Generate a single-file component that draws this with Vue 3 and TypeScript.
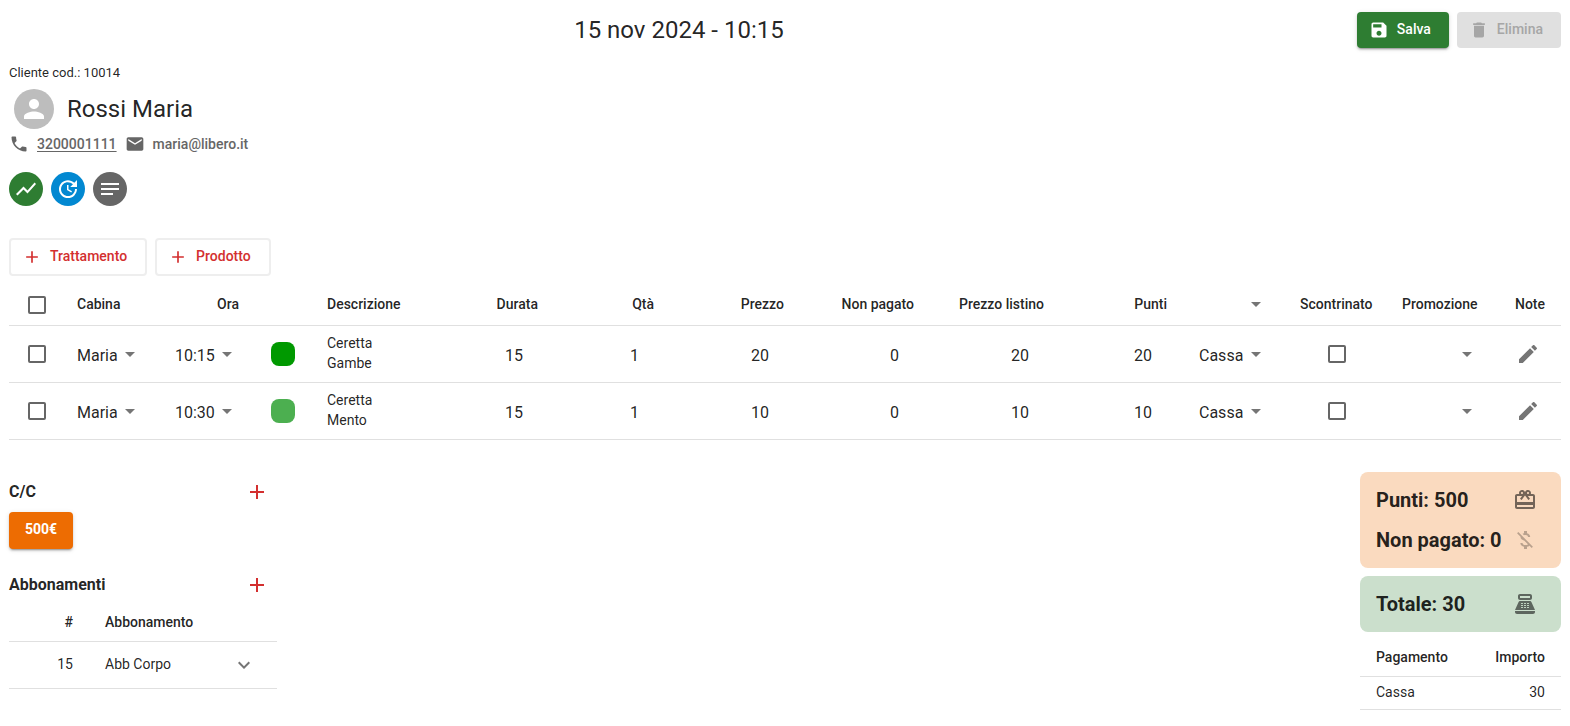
<script setup lang="ts">
import { ref } from 'vue'

interface Row {
  id: number
  selected: boolean
  cabina: string
  ora: string
  shade: string
  descrizione: string
  durata: number
  qta: number
  prezzo: number
  nonPagato: number
  listino: number
  punti: number
  cassa: string
  scontrinato: boolean
  promozione: string
}

type NumericKey = 'durata' | 'qta' | 'prezzo' | 'nonPagato' | 'listino' | 'punti'

const numericColumns: { key: NumericKey; label: string; cls: string }[] = [
  { key: 'durata', label: 'Durata', cls: 'c-durata' },
  { key: 'qta', label: 'Qtà', cls: 'c-qta' },
  { key: 'prezzo', label: 'Prezzo', cls: 'c-price' },
  { key: 'nonPagato', label: 'Non pagato', cls: 'c-price' },
  { key: 'listino', label: 'Prezzo listino', cls: 'c-price' },
  { key: 'punti', label: 'Punti', cls: 'c-punti' },
]

const allSelected = ref(false)
const allCassa = ref('')

const rows = ref<Row[]>([
  {
    id: 1, selected: false, cabina: 'Maria', ora: '10:15', shade: 'dark', descrizione: 'Ceretta Gambe',
    durata: 15, qta: 1, prezzo: 20, nonPagato: 0, listino: 20, punti: 20,
    cassa: 'Cassa', scontrinato: false, promozione: '',
  },
  {
    id: 2, selected: false, cabina: 'Maria', ora: '10:30', shade: 'light', descrizione: 'Ceretta Mento',
    durata: 15, qta: 1, prezzo: 10, nonPagato: 0, listino: 10, punti: 10,
    cassa: 'Cassa', scontrinato: false, promozione: '',
  },
])

function toggleAll() {
  rows.value.forEach((r) => { r.selected = allSelected.value })
}

const addPath = 'M19 13h-6v6h-2v-6H5v-2h6V5h2v6h6v2z'
const arrowPath = 'M7 10l5 5 5-5z'
</script>

<template>
  <main class="page">
    <header class="top">
      <h1 class="title">15 nov 2024 - 10:15</h1>
      <button type="button" class="btn btn-save">
        <svg class="ico-s" viewBox="0 0 24 24" aria-hidden="true"><path d="M17 3H5c-1.11 0-2 .9-2 2v14c0 1.1.89 2 2 2h14c1.1 0 2-.9 2-2V7l-4-4zm-5 16c-1.66 0-3-1.34-3-3s1.34-3 3-3 3 1.34 3 3-1.34 3-3 3zm3-10H5V5h10v4z" /></svg>
        <span>Salva</span>
      </button>
      <button type="button" class="btn btn-off" disabled>
        <svg class="ico-s" viewBox="0 0 24 24" aria-hidden="true"><path d="M6 19c0 1.1.9 2 2 2h8c1.1 0 2-.9 2-2V7H6v12zM19 4h-3.5l-1-1h-5l-1 1H5v2h14V4z" /></svg>
        <span>Elimina</span>
      </button>
    </header>

    <section class="client">
      <p class="code">Cliente cod.: 10014</p>
      <div class="who">
        <span class="avatar">
          <svg viewBox="0 0 24 24" aria-hidden="true"><path d="M12 12c2.21 0 4-1.79 4-4s-1.79-4-4-4-4 1.79-4 4 1.79 4 4 4zm0 2c-2.67 0-8 1.34-8 4v2h16v-2c0-2.66-5.33-4-8-4z" /></svg>
        </span>
        <h2 class="name">Rossi Maria</h2>
      </div>
      <div class="contacts">
        <svg class="ico-s" viewBox="0 0 24 24" aria-hidden="true"><path d="M6.620 10.790c1.440 2.830 3.760 5.140 6.590 6.590l2.200-2.200c.270-.270.670-.360 1.020-.240 1.120.370 2.330.570 3.570.570.550 0 1 .450 1 1V20c0 .550-.450 1-1 1-9.390 0-17-7.610-17-17 0-.550.450-1 1-1h3.500c.550 0 1 .450 1 1 0 1.250.200 2.450.570 3.570.110.350.030.740-.250 1.020l-2.200 2.200z" /></svg>
        <a class="phone" href="tel:3200001111">3200001111</a>
        <svg class="ico-s" viewBox="0 0 24 24" aria-hidden="true"><path d="M20 4H4c-1.1 0-1.99.9-1.99 2L2 18c0 1.1.9 2 2 2h16c1.1 0 2-.9 2-2V6c0-1.1-.9-2-2-2zm0 4l-8 5-8-5V6l8 5 8-5v2z" /></svg>
        <span>maria@libero.it</span>
      </div>
      <div class="rounds">
        <button type="button" class="round green" aria-label="Statistiche">
          <svg class="ico" viewBox="0 0 24 24" aria-hidden="true"><path d="M3.5 18.49l6-6.01 4 4L22 6.92l-1.41-1.41-7.09 7.97-4-4L2 16.99z" /></svg>
        </button>
        <button type="button" class="round blue" aria-label="Storico">
          <svg class="ico" viewBox="0 0 24 24" aria-hidden="true"><path d="M21 10.12h-6.78l2.74-2.82c-2.73-2.7-7.15-2.8-9.88-.1-2.73 2.71-2.73 7.08 0 9.79s7.15 2.71 9.88 0C18.32 15.65 19 14.08 19 12.1h2c0 1.98-.88 4.55-2.64 6.29-3.51 3.48-9.21 3.48-12.72 0-3.5-3.47-3.53-9.11-.02-12.58s9.14-3.47 12.65 0L21 3v7.12zM12.5 8v4.25l3.5 2.08-.72 1.21L11 13V8h1.5z" /></svg>
        </button>
        <button type="button" class="round grey" aria-label="Note cliente">
          <svg class="ico" viewBox="0 0 24 24" aria-hidden="true"><path d="M21 11.01L3 11v2h18zM3 16h12v2H3zM21 6H3v2.01L21 8z" /></svg>
        </button>
      </div>
    </section>

    <div class="adders">
      <button type="button" class="btn btn-line">
        <svg class="ico-s" viewBox="0 0 24 24" aria-hidden="true"><path :d="addPath" /></svg>
        <span>Trattamento</span>
      </button>
      <button type="button" class="btn btn-line">
        <svg class="ico-s" viewBox="0 0 24 24" aria-hidden="true"><path :d="addPath" /></svg>
        <span>Prodotto</span>
      </button>
    </div>

    <table class="grid main-grid">
      <thead>
        <tr>
          <th class="c-check"><input v-model="allSelected" type="checkbox" class="check" aria-label="Seleziona tutto" @change="toggleAll"></th>
          <th class="c-cabina">Cabina</th>
          <th class="c-ora num">Ora</th>
          <th class="c-shade"></th>
          <th>Descrizione</th>
          <th v-for="c in numericColumns" :key="c.key" class="num" :class="c.cls">{{ c.label }}</th>
          <th class="c-cassa num">
            <span class="pick">
              <select v-model="allCassa" aria-label="Cassa per tutti"><option value=""></option></select>
              <svg class="ico" viewBox="0 0 24 24" aria-hidden="true"><path :d="arrowPath" /></svg>
            </span>
          </th>
          <th class="c-scontr mid">Scontrinato</th>
          <th class="c-promo">Promozione</th>
          <th class="c-note num">Note</th>
        </tr>
      </thead>
      <tbody>
        <tr v-for="r in rows" :key="r.id">
          <td class="c-check"><input v-model="r.selected" type="checkbox" class="check" :aria-label="'Seleziona ' + r.descrizione"></td>
          <td>
            <span class="pick">
              <select v-model="r.cabina" aria-label="Cabina"><option>Maria</option></select>
              <svg class="ico" viewBox="0 0 24 24" aria-hidden="true"><path :d="arrowPath" /></svg>
            </span>
          </td>
          <td class="num">
            <span class="pick">
              <select v-model="r.ora" aria-label="Ora"><option>10:15</option><option>10:30</option></select>
              <svg class="ico" viewBox="0 0 24 24" aria-hidden="true"><path :d="arrowPath" /></svg>
            </span>
          </td>
          <td><span class="swatch" :class="r.shade"></span></td>
          <td><span class="desc">{{ r.descrizione }}</span></td>
          <td v-for="c in numericColumns" :key="c.key" class="num">
            <input v-model.number="r[c.key]" type="number" class="field" :aria-label="c.label">
          </td>
          <td class="num">
            <span class="pick">
              <select v-model="r.cassa" aria-label="Cassa"><option>Cassa</option></select>
              <svg class="ico" viewBox="0 0 24 24" aria-hidden="true"><path :d="arrowPath" /></svg>
            </span>
          </td>
          <td class="receipt"><input v-model="r.scontrinato" type="checkbox" class="check" aria-label="Scontrinato"></td>
          <td class="num">
            <span class="pick">
              <select v-model="r.promozione" aria-label="Promozione"><option value=""></option></select>
              <svg class="ico" viewBox="0 0 24 24" aria-hidden="true"><path :d="arrowPath" /></svg>
            </span>
          </td>
          <td class="mid">
            <button type="button" class="icon-btn" aria-label="Modifica note">
              <svg class="ico" viewBox="0 0 24 24" aria-hidden="true"><path d="M3 17.25V21h3.75L17.81 9.94l-3.75-3.75L3 17.25zM20.71 7.04c.39-.39.39-1.02 0-1.41l-2.34-2.34c-.39-.39-1.02-.39-1.41 0l-1.83 1.83 3.75 3.75 1.83-1.83z" /></svg>
            </button>
          </td>
        </tr>
      </tbody>
    </table>

    <div class="bottom">
      <section class="left">
        <div class="head">
          <h3>C/C</h3>
          <button type="button" class="icon-btn red" aria-label="Aggiungi C/C">
            <svg class="ico" viewBox="0 0 24 24" aria-hidden="true"><path :d="addPath" /></svg>
          </button>
        </div>
        <button type="button" class="btn btn-credit"><span>500€</span></button>
        <div class="head subs">
          <h3>Abbonamenti</h3>
          <button type="button" class="icon-btn red" aria-label="Aggiungi abbonamento">
            <svg class="ico" viewBox="0 0 24 24" aria-hidden="true"><path :d="addPath" /></svg>
          </button>
        </div>
        <table class="grid small">
          <thead>
            <tr><th class="c-num num">#</th><th>Abbonamento</th><th class="c-open"></th></tr>
          </thead>
          <tbody>
            <tr>
              <td class="num">15</td>
              <td>Abb Corpo</td>
              <td class="num open">
                <button type="button" class="icon-btn" aria-label="Espandi">
                  <svg class="ico" viewBox="0 0 24 24" aria-hidden="true"><path d="M16.59 8.59L12 13.17 7.41 8.59 6 10l6 6 6-6z" /></svg>
                </button>
              </td>
            </tr>
          </tbody>
        </table>
      </section>

      <aside class="right">
        <div class="card peach">
          <div class="line">
            <span>Punti: 500</span>
            <svg class="ico" viewBox="0 0 24 24" aria-hidden="true"><path d="M20 6h-2.18c.11-.31.18-.65.18-1 0-1.66-1.34-3-3-3-1.05 0-1.96.54-2.5 1.35l-.5.67-.5-.68C10.96 2.54 10.05 2 9 2 7.34 2 6 3.34 6 5c0 .35.07.69.18 1H4c-1.11 0-1.99.89-1.99 2L2 19c0 1.11.89 2 2 2h16c1.11 0 2-.89 2-2V8c0-1.11-.89-2-2-2zm-5-2c.55 0 1 .45 1 1s-.45 1-1 1-1-.45-1-1 .45-1 1-1zM9 4c.55 0 1 .45 1 1s-.45 1-1 1-1-.45-1-1 .45-1 1-1zm11 15H4v-2h16v2zm0-5H4V8h5.08L7 10.83 8.62 12 11 8.76l1-1.36 1 1.36L15.38 12 17 10.83 14.92 8H20v6z" /></svg>
          </div>
          <div class="line">
            <span>Non pagato: 0</span>
            <svg class="ico faint" viewBox="0 0 24 24" aria-hidden="true"><path d="M12.5 6.9c1.78 0 2.44.85 2.5 2.1h2.21c-.07-1.72-1.12-3.3-3.21-3.81V3h-3v2.16c-.53.12-1.03.3-1.48.54l1.47 1.47c.41-.17.91-.27 1.51-.27zM5.33 4.06L4.06 5.33 7.5 8.77c0 2.08 1.56 3.21 3.91 3.91l3.51 3.51c-.34.48-1.05.91-2.42.91-2.06 0-2.87-.92-2.98-2.1h-2.2c.12 2.19 1.76 3.42 3.68 3.83V21h3v-2.15c.96-.18 1.82-.55 2.45-1.12l2.22 2.22 1.27-1.27L5.33 4.06z" /></svg>
          </div>
        </div>
        <div class="card mint">
          <div class="line">
            <span>Totale: 30</span>
            <svg class="ico" viewBox="0 0 24 24" aria-hidden="true"><path fill-rule="evenodd" d="M17 2H7c-1.1 0-2 .9-2 2v2c0 1.1.9 2 2 2h10c1.1 0 2-.9 2-2V4c0-1.1-.9-2-2-2zm0 4H7V4h10v2zm3 16H4c-1.1 0-2-.9-2-2v-1h20v1c0 1.1-.9 2-2 2zm-1.47-11.81C18.21 9.47 17.49 9 16.7 9H7.3c-.79 0-1.51.47-1.83 1.19L2 18h20l-3.47-7.81zM8.5 11h1a.5.5 0 0 1 0 1h-1a.5.5 0 0 1 0-1zm0 2h1a.5.5 0 0 1 0 1h-1a.5.5 0 0 1 0-1zm0 2h1a.5.5 0 0 1 0 1h-1a.5.5 0 0 1 0-1zm3-4h1a.5.5 0 0 1 0 1h-1a.5.5 0 0 1 0-1zm0 2h1a.5.5 0 0 1 0 1h-1a.5.5 0 0 1 0-1zm0 2h1a.5.5 0 0 1 0 1h-1a.5.5 0 0 1 0-1zm3-4h1a.5.5 0 0 1 0 1h-1a.5.5 0 0 1 0-1zm0 2h1a.5.5 0 0 1 0 1h-1a.5.5 0 0 1 0-1zm0 2h1a.5.5 0 0 1 0 1h-1a.5.5 0 0 1 0-1z" /></svg>
          </div>
        </div>
        <table class="grid small">
          <thead><tr><th>Pagamento</th><th class="num">Importo</th></tr></thead>
          <tbody><tr><td>Cassa</td><td class="num">30</td></tr></tbody>
        </table>
      </aside>
    </div>
  </main>
</template>

<style>
body {
  margin: 0;
  background: #fff;
}
</style>

<style scoped>
.page {
  box-sizing: border-box;
  padding: 12px 9px 16px;
  font-family: Roboto, "Liberation Sans", sans-serif;
  font-size: 14px;
  line-height: 20px;
  color: rgba(0, 0, 0, 0.87);
}
.page *, .page *::before {
  box-sizing: border-box;
}
h1, h2, h3, p {
  margin: 0;
}
button, select, input {
  font: inherit;
  color: inherit;
}
button {
  cursor: pointer;
}
svg {
  display: block;
  flex: none;
  fill: currentColor;
}
.ico {
  width: 24px;
  height: 24px;
}
.ico-s {
  width: 20px;
  height: 20px;
}
.top {
  display: flex;
  align-items: center;
  gap: 8px;
}
.title, .name {
  font-size: 24px;
  line-height: 32px;
  font-weight: 400;
}
.title {
  flex: 1;
  text-align: center;
}
.btn {
  display: inline-flex;
  align-items: center;
  gap: 8px;
  height: 36px;
  padding: 0 18px 0 12px;
  border: 0;
  border-radius: 4px;
  font-weight: 500;
}
.btn span {
  padding-bottom: 2px;
}
.btn-save, .btn-credit {
  color: #fff;
  box-shadow: 0 3px 1px -2px rgba(0, 0, 0, 0.2), 0 2px 2px 0 rgba(0, 0, 0, 0.14), 0 1px 5px 0 rgba(0, 0, 0, 0.12);
}
.btn-save {
  background: #2e7d32;
}
.btn-off {
  background: #e0e0e0;
  color: #a6a6a6;
  cursor: default;
}
.btn-line {
  height: 38px;
  padding-left: 11px;
  border: 2px solid #eee;
  background: #fff;
  color: #d32f2f;
}
.btn-credit {
  height: 37px;
  padding: 0 16px;
  background: #ed6c02;
  font-weight: 700;
}
.btn-credit span {
  padding-bottom: 4px;
}
.client {
  margin-top: 15px;
}
.code {
  font-size: 13px;
}
.who {
  display: flex;
  align-items: center;
  gap: 13px;
  padding: 6px 5px 5px;
}
.avatar {
  display: grid;
  place-items: center;
  width: 40px;
  height: 40px;
  border-radius: 50%;
  background: #bdbdbd;
  color: #fff;
}
.avatar svg {
  width: 30px;
  height: 30px;
}
.contacts {
  display: flex;
  align-items: center;
  gap: 8px;
  font-weight: 500;
  color: #666;
}
.phone {
  color: inherit;
  text-underline-offset: 2px;
}
.rounds {
  display: flex;
  gap: 8px;
  margin-top: 18px;
}
.round {
  display: grid;
  place-items: center;
  width: 34px;
  height: 34px;
  padding: 0;
  border: 0;
  border-radius: 50%;
  color: #fff;
}
.green { background: #2e7d32; }
.blue { background: #0288d1; }
.grey { background: #666; }
.adders {
  display: flex;
  gap: 8px;
  margin: 32px 0 8px;
}
.grid {
  width: 100%;
  border-collapse: separate;
  border-spacing: 0;
}
.grid th, .grid td {
  padding: 0 16px;
  border-bottom: 1px solid #e0e0e0;
  text-align: left;
  white-space: nowrap;
}
.grid th {
  font-weight: 500;
}
.grid .num {
  text-align: right;
}
.grid .mid {
  text-align: center;
}
.main-grid {
  table-layout: fixed;
}
.main-grid th {
  height: 42px;
  padding-bottom: 2px;
}
.main-grid td {
  height: 57px;
}
.grid .c-check {
  width: 52px;
  padding: 0 0 0 19px;
}
.c-cabina { width: 97px; }
.c-ora { width: 97px; }
.c-shade { width: 56px; }
.c-durata { width: 116px; }
.c-qta { width: 116px; }
.c-price { width: 130px; }
.c-punti { width: 123px; }
.c-cassa { width: 101px; }
.c-scontr { width: 102px; }
.c-promo { width: 109px; }
.c-note { width: 66px; }
.check {
  appearance: none;
  display: block;
  width: 18px;
  height: 18px;
  margin: 0;
  border: 2px solid #666;
  border-radius: 2px;
  background: #fff;
}
.check:checked {
  background: #2e7d32;
}
.grid .receipt {
  padding-left: 20px;
}
.receipt .check {
  margin: 0 auto;
}
.pick {
  position: relative;
  display: inline-block;
  vertical-align: middle;
}
.pick select {
  appearance: none;
  display: block;
  height: 24px;
  min-width: 24px;
  padding: 4px 24px 0 0;
  border: 0;
  background: transparent;
  font-size: 16px;
  font-weight: 400;
}
.pick svg {
  position: absolute;
  top: 0;
  right: 0;
  color: #757575;
  pointer-events: none;
}
.field {
  display: block;
  width: 100%;
  height: 24px;
  padding: 2px 0 0;
  border: 0;
  background: transparent;
  font-size: 16px;
  text-align: right;
}
.swatch {
  display: block;
  width: 24px;
  height: 24px;
  border-radius: 8px;
}
.dark { background: #009900; }
.light { background: #4caf50; }
.desc {
  display: block;
  max-width: 80px;
  padding-bottom: 2px;
  white-space: normal;
}
.icon-btn {
  display: inline-grid;
  place-items: center;
  width: 34px;
  height: 34px;
  padding: 0;
  border: 0;
  border-radius: 50%;
  background: transparent;
  color: #757575;
  vertical-align: middle;
}
.icon-btn.red {
  color: #d32f2f;
}
.bottom {
  display: flex;
  justify-content: space-between;
  align-items: flex-start;
  margin-top: 32px;
}
.left {
  width: 268px;
}
.head {
  display: flex;
  align-items: center;
  justify-content: space-between;
  height: 40px;
  padding-right: 3px;
}
.head h3 {
  font-size: 16px;
  font-weight: 700;
}
.subs {
  margin-top: 16px;
}
.small th, .small td {
  padding: 5px 16px 7px;
}
.small .open {
  padding: 6px 16px;
}
.small th {
  line-height: 24px;
}
.small .c-num {
  width: 80px;
}
.small .c-open {
  width: 66px;
}
.right {
  width: 201px;
}
.card {
  margin-bottom: 8px;
  padding: 8px 24px 8px 16px;
  border-radius: 8px;
  font-size: 20px;
  font-weight: 700;
}
.line {
  display: flex;
  align-items: center;
  justify-content: space-between;
  height: 40px;
  white-space: nowrap;
}
.line svg {
  color: rgba(0, 0, 0, 0.54);
}
.line .faint {
  color: rgba(0, 0, 0, 0.26);
}
.peach { background: #fadabf; }
.mint { background: #cbdfcc; }
</style>
